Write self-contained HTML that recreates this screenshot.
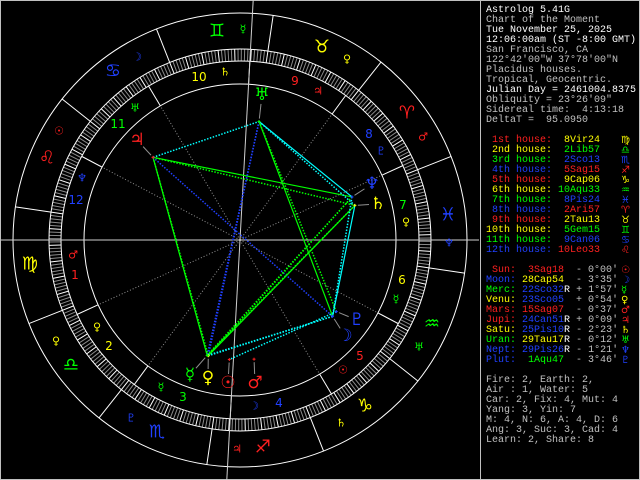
<!DOCTYPE html>
<html><head><meta charset="utf-8"><style>
html,body{margin:0;padding:0;background:#000;width:640px;height:480px;overflow:hidden}
#wrap{position:relative;width:640px;height:480px}
svg{position:absolute;left:0;top:0}
.p{position:absolute;left:486px;top:6px;font:10px/10px "Liberation Mono",monospace;color:#c0c0c0;white-space:pre;margin:0}
.g{position:absolute;left:621px;top:6px;font:10px/10px "DejaVu Sans",sans-serif;white-space:pre;margin:0}
.w{color:#fff}.r{color:#ff2020}.y{color:#ffff00}.gr{color:#00ff00}.b{color:#2040ff}
svg text{font-family:"DejaVu Sans",sans-serif;text-anchor:middle;dominant-baseline:central}
</style></head><body><div id="wrap">
<svg id="s" width="640" height="480" viewBox="0 0 640 480">
<rect x="0.5" y="0.5" width="639" height="479" fill="none" stroke="#c0c0c0"/>
<line x1="480.5" y1="0" x2="480.5" y2="480" stroke="#c0c0c0"/>
<g id="dyn"></g>
<g font-size="18">
<text x="217" y="31" fill="#00ff00">♊︎</text>
<text x="322" y="47" fill="#ffff00">♉︎</text>
<text x="113" y="71" fill="#2040ff">♋︎</text>
<text x="47" y="158" fill="#ff2020">♌︎</text>
<text x="30" y="264" fill="#ffff00">♍︎</text>
<text x="71" y="365" fill="#00ff00">♎︎</text>
<text x="157" y="432" fill="#2040ff">♏︎</text>
<text x="263" y="447" fill="#ff2020">♐︎</text>
<text x="365" y="406" fill="#ffff00">♑︎</text>
<text x="432" y="324" fill="#00ff00">♒︎</text>
<text x="448" y="215" fill="#2040ff">♓︎</text>
<text x="407" y="113" fill="#ff2020">♈︎</text>
</g>
<g font-size="11">
<text x="243" y="29" fill="#00ff00">☿</text>
<text x="347" y="59" fill="#ffff00">♀</text>
<text x="137" y="57" fill="#2040ff">☽</text>
<text x="59" y="131" fill="#ff2020">☉</text>
<text x="73" y="255" fill="#ff2020">♂</text>
<text x="56" y="341" fill="#ffff00">♀</text>
<text x="131" y="418" fill="#2040ff">♇</text>
<text x="237" y="449" fill="#ff2020">♃</text>
<text x="341" y="423" fill="#ffff00">♄</text>
<text x="419" y="347" fill="#00ff00">♅</text>
<text x="449" y="243" fill="#2040ff">♆</text>
<text x="423" y="137" fill="#ff2020">♂</text>
<text x="225" y="72" fill="#ffff00">♄</text>
<text x="135" y="108" fill="#00ff00">♅</text>
<text x="82" y="178" fill="#2040ff">♆</text>
<text x="97" y="327" fill="#ffff00">♀</text>
<text x="161" y="387" fill="#00ff00">☿</text>
<text x="254" y="406" fill="#2040ff">☽</text>
<text x="343" y="370" fill="#ff2020">☉</text>
<text x="396" y="299" fill="#00ff00">☿</text>
<text x="406" y="222" fill="#ffff00">♀</text>
<text x="381" y="151" fill="#2040ff">♇</text>
<text x="318" y="91" fill="#ff2020">♃</text>
</g>
<g font-size="12" style="font-family:'Liberation Mono',monospace">
<text x="199" y="77" fill="#ffff00">10</text>
<text x="118" y="124" fill="#00ff00">11</text>
<text x="76" y="200" fill="#2040ff">12</text>
<text x="75" y="275" fill="#ff2020">1</text>
<text x="109" y="346" fill="#ffff00">2</text>
<text x="183" y="397" fill="#00ff00">3</text>
<text x="279" y="403" fill="#2040ff">4</text>
<text x="360" y="356" fill="#ff2020">5</text>
<text x="402" y="280" fill="#ffff00">6</text>
<text x="403" y="205" fill="#00ff00">7</text>
<text x="369" y="134" fill="#2040ff">8</text>
<text x="295" y="81" fill="#ff2020">9</text>
</g>
<g font-size="17">
<text x="137" y="140" fill="#ff2020">♃</text>
<text x="262" y="95" fill="#00ff00">♅</text>
<text x="372" y="184" fill="#2040ff">♆</text>
<text x="378" y="204" fill="#ffff00">♄</text>
<text x="357" y="320" fill="#2040ff">♇</text>
<text x="345" y="336" fill="#2040ff">☽</text>
<text x="255" y="383" fill="#ff2020">♂</text>
<text x="228" y="383" fill="#ff2020">☉</text>
<text x="208" y="378" fill="#ffff00">♀</text>
<text x="190" y="375" fill="#00ff00">☿</text>
</g>
</svg>
<pre class="p"><span class="w">Astrolog 5.41G</span>
Chart of the Moment
<span class="w">Tue November 25, 2025</span>
<span class="w">12:06:00am (ST -8:00 GMT)</span>
San Francisco, CA
122°42'00"W 37°78'00"N
Placidus houses.
Tropical, Geocentric.
<span class="w">Julian Day = 2461004.8375</span>
Obliquity = 23°26'09"
Sidereal time:  4:13:18
DeltaT =  95.0950

<span class="r"> 1st house:</span>  <span class="y">8Vir24</span>
<span class="y"> 2nd house:</span>  <span class="gr">2Lib57</span>
<span class="gr"> 3rd house:</span>  <span class="b">2Sco13</span>
<span class="b"> 4th house:</span>  <span class="r">5Sag15</span>
<span class="r"> 5th house:</span>  <span class="y">9Cap06</span>
<span class="y"> 6th house:</span> <span class="gr">10Aqu33</span>
<span class="gr"> 7th house:</span>  <span class="b">8Pis24</span>
<span class="b"> 8th house:</span>  <span class="r">2Ari57</span>
<span class="r"> 9th house:</span>  <span class="y">2Tau13</span>
<span class="y">10th house:</span>  <span class="gr">5Gem15</span>
<span class="gr">11th house:</span>  <span class="b">9Can06</span>
<span class="b">12th house:</span> <span class="r">10Leo33</span>

<span class="r"> Sun:</span>  <span class="r">3Sag18</span>  - 0°00'
<span class="b">Moon:</span> <span class="y">28Cap54</span>  - 3°35'
<span class="gr">Merc:</span> <span class="b">22Sco32</span><span class="w">R</span> + 1°57'
<span class="y">Venu:</span> <span class="b">23Sco05</span>  + 0°54'
<span class="r">Mars:</span> <span class="r">15Sag07</span>  - 0°37'
<span class="r">Jupi:</span> <span class="b">24Can51</span><span class="w">R</span> + 0°09'
<span class="y">Satu:</span> <span class="b">25Pis10</span><span class="w">R</span> - 2°23'
<span class="gr">Uran:</span> <span class="y">29Tau17</span><span class="w">R</span> - 0°12'
<span class="b">Nept:</span> <span class="b">29Pis26</span><span class="w">R</span> - 1°21'
<span class="b">Plut:</span>  <span class="gr">1Aqu47</span>  - 3°46'

Fire: 2, Earth: 2,
Air : 1, Water: 5
Car: 2, Fix: 4, Mut: 4
Yang: 3, Yin: 7
M: 4, N: 6, A: 4, D: 6
Ang: 3, Suc: 3, Cad: 4
Learn: 2, Share: 8</pre>
<pre class="g">

&nbsp;











<span class="y">♍︎</span>
<span class="gr">♎︎</span>
<span class="b">♏︎</span>
<span class="r">♐︎</span>
<span class="y">♑︎</span>
<span class="gr">♒︎</span>
<span class="b">♓︎</span>
<span class="r">♈︎</span>
<span class="y">♉︎</span>
<span class="gr">♊︎</span>
<span class="b">♋︎</span>
<span class="r">♌︎</span>

<span class="r">☉</span>
<span class="b">☽</span>
<span class="gr">☿</span>
<span class="y">♀</span>
<span class="r">♂</span>
<span class="r">♃</span>
<span class="y">♄</span>
<span class="gr">♅</span>
<span class="b">♆</span>
<span class="b">♇</span></pre>
</div>
<script>
(function(){
var NS="http://www.w3.org/2000/svg",g=document.getElementById("dyn");
function P(L,r){var a=(L+21.6)*Math.PI/180;return[240+r*Math.cos(a),240-r*Math.sin(a)];}
function ln(a,b,c,dash,w){var e=document.createElementNS(NS,"line");e.setAttribute("x1",a[0]);e.setAttribute("y1",a[1]);e.setAttribute("x2",b[0]);e.setAttribute("y2",b[1]);e.setAttribute("stroke",c);e.setAttribute("stroke-width",w||1);if(dash)e.setAttribute("stroke-dasharray",dash);g.appendChild(e);}
function ci(r){var e=document.createElementNS(NS,"circle");e.setAttribute("cx",240);e.setAttribute("cy",240);e.setAttribute("r",r);e.setAttribute("fill","none");e.setAttribute("stroke","#fff");g.appendChild(e);}
var d;
for(d=0;d<360;d++){ln(P(d,179),P(d,191),d%5==0?"#fff":"#8a8a8a");}
var H=[158.4,182.95,212.22,245.25,279.1,310.55,338.4,2.95,32.22,65.25,99.1,130.55];
H.forEach(function(h,i){ln(P(h,156),P(h,179),"#fff");if(i%3)ln(P(h,0),P(h,156),"#909090","1,2");});
for(d=0;d<12;d++)ln(P(d*30,191),P(d*30,227),"#fff");
[227,191,179,156].forEach(ci);
ln([1,240],[479,240],"#d0d0d0");
var m1=P(65.25,245),m2=P(245.25,245);ln(m1,m2,"#d0d0d0");
var pl={Su:243.3,Mo:298.9,Me:232.53,Ve:233.08,Ma:255.12,Ju:114.85,Sa:355.17,Ur:59.28,Ne:359.43,Pl:301.78};
var M={};for(var k in pl)M[k]=P(pl[k],120);
var CY="#00ffff",GN="#00ff00",BL="#2040ff";
var asp=[["Ju","Ne",GN,0],["Ju","Sa",GN,1],["Ju","Ur",CY,1],["Ju","Me",GN,0],["Ju","Ve",GN,1],["Ju","Mo",BL,1],
["Ur","Ne",CY,0],["Ur","Sa",CY,1],["Ur","Mo",GN,0],["Ur","Pl",GN,1],["Ur","Me",BL,1],["Ur","Ve",BL,1],
["Sa","Me",GN,1],["Sa","Ve",GN,0],["Ne","Me",GN,1],["Ne","Ve",GN,1],["Sa","Mo",CY,0],["Ne","Mo",CY,1],
["Pl","Su",CY,1],["Mo","Me",CY,1],["Mo","Ve",CY,1]];
asp.forEach(function(a){ln(M[a[0]],M[a[1]],a[2],a[3]?"1.5,1.5":null,a[3]?1.5:1.2);});
var gl={Ju:[137,140],Ur:[262,95],Ne:[372,184],Sa:[378,204],Pl:[357,320],Mo:[345,336],Ma:[255,383],Su:[228,383],Ve:[208,378],Me:[190,375]};
var col={Su:"#ff2020",Mo:BL,Me:GN,Ve:"#ffff00",Ma:"#ff2020",Ju:"#ff2020",Sa:"#ffff00",Ur:GN,Ne:BL,Pl:BL};
for(k in gl){var a=M[k],b=gl[k],dx=b[0]-a[0],dy=b[1]-a[1],L=Math.sqrt(dx*dx+dy*dy);
if(L>12)ln([a[0]+dx*3/L,a[1]+dy*3/L],[b[0]-dx*9/L,b[1]-dy*9/L],"#909090");
ln([a[0]-1.5,a[1]],[a[0]+1.5,a[1]],col[k]);ln([a[0],a[1]-1.5],[a[0],a[1]+1.5],col[k]);}
})();
</script>
</body></html>
